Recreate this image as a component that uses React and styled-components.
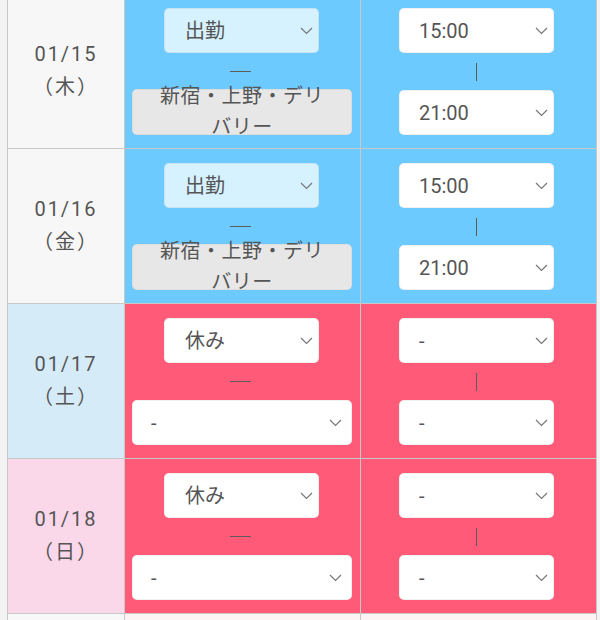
import React from 'react';
import styled, { createGlobalStyle } from 'styled-components';

const Global = createGlobalStyle`
  html, body { margin: 0; padding: 0; background: #f3f3f3; }
  body { font-family: Roboto, "Noto Sans CJK JP", sans-serif; color: #555; }
`;

const Page = styled.div`
  padding: 0 0 0 7px;
  margin-top: -7px;
`;

const Table = styled.div`
  display: grid;
  grid-template-columns: 116px 235px 235px;
  grid-auto-rows: 154px;
  gap: 1px;
  background: #c8c8c8;
  border: 1px solid #c8c8c8;
  width: max-content;
`;

const DateCell = styled.div`
  background: ${(p) => p.$bg};
  display: flex;
  flex-direction: column;
  align-items: center;
  justify-content: center;
  font-size: 20px;
  line-height: 33px;
  letter-spacing: 2px;
  color: #555;
`;

const ShiftCell = styled.div`
  background: ${(p) => p.$bg};
  display: flex;
  flex-direction: column;
  align-items: flex-start;
  padding: 14px 8px 13px 7px;
`;

const TimeCell = styled.div`
  background: ${(p) => p.$bg};
  display: flex;
  flex-direction: column;
  align-items: flex-start;
  padding: 14px 0 13px 38px;
`;

const SelectWrap = styled.div`
  position: relative;
  width: ${(p) => p.$width};
  margin-left: ${(p) => p.$offset || '0px'};
  height: 45px;
`;

const NativeSelect = styled.select`
  appearance: none;
  -webkit-appearance: none;
  width: 100%;
  height: 100%;
  box-sizing: border-box;
  border: 1px solid rgba(0, 0, 0, 0.06);
  border-radius: 5px;
  background: ${(p) => p.$bg || '#fff'};
  font-family: Roboto, "Noto Sans CJK JP", sans-serif;
  font-size: 20px;
  color: #555;
  padding: 0 28px 0 ${(p) => p.$pad || '19px'};
  outline: none;
  margin: 0;
`;

const Chevron = styled.svg`
  position: absolute;
  right: ${(p) => p.$right || '6px'};
  top: 50%;
  transform: translateY(-50%);
  pointer-events: none;
`;

const ShopField = styled.div`
  width: 100%;
  height: 46px;
  box-sizing: border-box;
  background: #e7e7e7;
  border: 1px solid rgba(0, 0, 0, 0.04);
  border-radius: 5px;
  display: flex;
  align-items: center;
  justify-content: center;
  text-align: center;
  padding: 0 24px;
  font-size: 20px;
  line-height: 31px;
  letter-spacing: 0.5px;
  color: #555;
  margin-top: -1px;
`;

const DashSep = styled.div`
  width: 100%;
  height: 37px;
  display: flex;
  align-items: center;
  justify-content: center;
  padding-right: 4px;
  box-sizing: border-box;
  &::after {
    content: '';
    width: 21px;
    height: 1px;
    background: #5c5c5c;
  }
`;

const BarSep = styled.div`
  width: 155px;
  height: 37px;
  display: flex;
  align-items: center;
  justify-content: center;
  &::after {
    content: '';
    width: 1px;
    height: 18px;
    background: #5c5c5c;
  }
`;

function Select({ value, options, width, offset, bg, pad, chevRight }) {
  return (
    <SelectWrap $width={width} $offset={offset}>
      <NativeSelect defaultValue={value} $bg={bg} $pad={pad}>
        {options.map((o) => (
          <option key={o} value={o}>
            {o}
          </option>
        ))}
      </NativeSelect>
      <Chevron $right={chevRight} width="13" height="8" viewBox="0 0 13 8">
        <polyline points="1,1 6.5,6.5 12,1" fill="none" stroke="#777" strokeWidth="1.2" />
      </Chevron>
    </SelectWrap>
  );
}

const BLUE = '#6ccaff';
const RED = '#ff5a78';

const rows = [
  { date: '01/15', dow: '木', dateBg: '#f7f7f7', bg: BLUE, status: '出勤', statusBg: '#d6f1ff', shop: '新宿・上野・デリバリー', start: '15:00', end: '21:00' },
  { date: '01/16', dow: '金', dateBg: '#f7f7f7', bg: BLUE, status: '出勤', statusBg: '#d6f1ff', shop: '新宿・上野・デリバリー', start: '15:00', end: '21:00' },
  { date: '01/17', dow: '土', dateBg: '#d6ebf8', bg: RED, status: '休み', statusBg: '#fff', shop: null, start: '-', end: '-' },
  { date: '01/18', dow: '日', dateBg: '#fbd7ea', bg: RED, status: '休み', statusBg: '#fff', shop: null, start: '-', end: '-' },
  { date: '01/19', dow: '月', dateBg: '#f8f8f8', bg: '#fdf3f5', status: '休み', statusBg: '#fff', shop: null, start: '-', end: '-' },
];

const times = ['-', '15:00', '16:00', '17:00', '18:00', '19:00', '20:00', '21:00'];

export default function App() {
  return (
    <>
      <Global />
      <Page>
        <Table>
          {rows.map((r) => (
            <React.Fragment key={r.date}>
              <DateCell $bg={r.dateBg}>
                <span>{r.date}</span>
                <span>（{r.dow}）</span>
              </DateCell>
              <ShiftCell $bg={r.bg}>
                <Select value={r.status} options={['出勤', '休み']} width="155px" offset="32px" bg={r.statusBg} pad="20px" />
                <DashSep />
                {r.shop ? (
                  <ShopField>{r.shop}</ShopField>
                ) : (
                  <Select value="-" options={['-', '新宿・上野・デリバリー']} width="220px" bg="#fff" pad="18px" chevRight="10px" />
                )}
              </ShiftCell>
              <TimeCell $bg={r.bg}>
                <Select value={r.start} options={times} width="155px" bg="#fff" />
                <BarSep />
                <Select value={r.end} options={times} width="155px" bg="#fff" />
              </TimeCell>
            </React.Fragment>
          ))}
        </Table>
      </Page>
    </>
  );
}
